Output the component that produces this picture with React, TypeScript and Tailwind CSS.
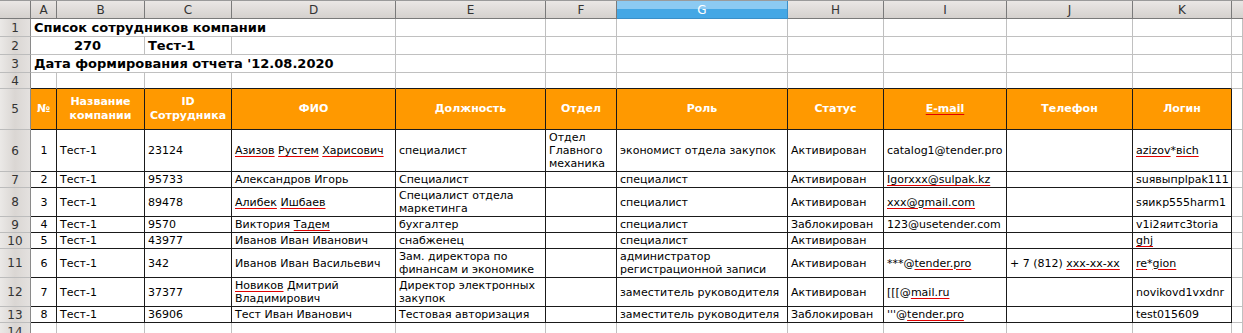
import type { ReactNode } from 'react';
import clsx from 'clsx';

// spell-check underline like in Calc
const U = ({ children }: { children: ReactNode }) => (
  <span className="underline decoration-[#e00000] decoration-1 underline-offset-[2px]">{children}</span>
);

const letters = ['A', 'B', 'C', 'D', 'E', 'F', 'G', 'H', 'I', 'J', 'K'];

type Row = {
  n: string;
  id: string;
  fio: ReactNode;
  pos: ReactNode;
  dept?: ReactNode;
  role: ReactNode;
  status: string;
  email?: ReactNode;
  phone?: ReactNode;
  login: ReactNode;
};

const rows: Row[] = [
  {
    n: '1',
    id: '23124',
    fio: (
      <>
        <U>Азизов</U> <U>Рустем</U> <U>Харисович</U>
      </>
    ),
    pos: 'специалист',
    dept: 'Отдел Главного механика',
    role: 'экономист отдела закупок',
    status: 'Активирован',
    email: 'catalog1@tender.pro',
    login: (
      <>
        <U>azizov</U>*<U>вich</U>
      </>
    ),
  },
  {
    n: '2',
    id: '95733',
    fio: 'Александров Игорь',
    pos: 'Специалист',
    role: 'специалист',
    status: 'Активирован',
    email: <U>Igorxxx@sulpak.kz</U>,
    login: 'suявыпplpak111',
  },
  {
    n: '3',
    id: '89478',
    fio: (
      <>
        <U>Алибек</U> <U>Ишбаев</U>
      </>
    ),
    pos: 'Специалист отдела маркетинга',
    role: 'специалист',
    status: 'Активирован',
    email: <U>xxx@gmail.com</U>,
    login: 'sяикp555harm1',
  },
  {
    n: '4',
    id: '9570',
    fio: (
      <>
        Виктория <U>Тадем</U>
      </>
    ),
    pos: 'бухгалтер',
    role: 'специалист',
    status: 'Заблокирован',
    email: '123@usetender.com',
    login: 'v1i2яитс3toria',
  },
  {
    n: '5',
    id: '43977',
    fio: 'Иванов Иван Иванович',
    pos: 'снабженец',
    role: 'специалист',
    status: 'Активирован',
    login: <U>ghj</U>,
  },
  {
    n: '6',
    id: '342',
    fio: 'Иванов Иван Васильевич',
    pos: 'Зам. директора по финансам и экономике',
    role: 'администратор регистрационной записи',
    status: 'Активирован',
    email: (
      <>
        ***@<U>tender.pro</U>
      </>
    ),
    phone: (
      <>
        + 7 (812) <U>xxx-xx-xx</U>
      </>
    ),
    login: (
      <>
        <U>re</U>*<U>gion</U>
      </>
    ),
  },
  {
    n: '7',
    id: '37377',
    fio: (
      <>
        <U>Новиков</U> Дмитрий Владимирович
      </>
    ),
    pos: 'Директор электронных закупок',
    role: 'заместитель руководителя',
    status: 'Активирован',
    email: (
      <>
        [[[@<U>mail.ru</U>
      </>
    ),
    login: 'novikovd1vxdnr',
  },
  {
    n: '8',
    id: '36906',
    fio: 'Тест Иван Иванович',
    pos: 'Тестовая авторизация',
    role: 'заместитель руководителя',
    status: 'Заблокирован',
    email: (
      <>
        '''@<U>tender.pro</U>
      </>
    ),
    login: 'test015609',
  },
];

const headers: ReactNode[] = [
  '№',
  <>
    Название
    <br />
    компании
  </>,
  <>
    ID
    <br />
    Сотрудника
  </>,
  'ФИО',
  'Должность',
  'Отдел',
  'Роль',
  'Статус',
  <U>E-mail</U>,
  'Телефон',
  'Логин',
];

const RowHead = ({ children }: { children?: ReactNode }) => (
  <div className="flex items-center justify-center border-b border-r border-b-[#bcbcbc] border-r-[#8a8a8a] bg-linear-to-r from-[#ebe9e7] via-[#dad6d3] to-[#e4e1df] text-[12px] text-[#333]">
    {children}
  </div>
);

const Grid = ({ className, children }: { className?: string; children?: ReactNode }) => (
  <div className={clsx('flex items-center overflow-visible whitespace-nowrap border-b border-r border-[#c0c0c0] bg-white', className)}>
    {children}
  </div>
);

const Td = ({ className, children }: { className?: string; children?: ReactNode }) => (
  <div className={clsx('flex items-center overflow-hidden border-b border-r border-[#1a1a1a] bg-white pl-[3px] pr-[2px] text-[11px] leading-[13px] text-black', className)}>
    <div>{children}</div>
  </div>
);

export default function App() {
  return (
    <div className="h-[333px] w-[1243px] overflow-hidden bg-white font-['DejaVu_Sans',sans-serif]">
      <div className="grid h-[333px] grid-cols-[31px_26px_88px_87px_164px_150px_71px_171px_96px_123px_126px_99px_1fr] grid-rows-[18px_18px_18px_18px_16px_41px_42px_16px_29px_16px_16px_29px_29px_16px_1fr] border-t border-[#9a9a9a]">
        {/* column headers */}
        <div className="border-b border-r border-[#7a7a7a] bg-linear-to-b from-[#eae7e5] to-[#d5d1ce]" />
        {letters.map((l) =>
          l === 'G' ? (
            <div
              key={l}
              className="flex items-center justify-center border-b border-r border-[#3a8fc8] bg-linear-to-b from-[#8ccaf2] from-50% to-[#44a7e5] to-50% text-[12px] text-white"
            >
              {l}
            </div>
          ) : (
            <div
              key={l}
              className="flex items-center justify-center border-b border-r border-b-[#7a7a7a] border-r-[#7a7a7a] bg-linear-to-b from-[#eae7e5] to-[#d5d1ce] text-[12px] text-[#333]"
            >
              {l}
            </div>
          )
        )}
        <div className="border-b border-[#7a7a7a] bg-linear-to-b from-[#eae7e5] to-[#d5d1ce]" />

        {/* row 1 */}
        <RowHead>1</RowHead>
        <Grid className="col-span-4 pl-[3px] text-[13px] font-bold">Список сотрудников компании</Grid>
        {letters.slice(4).map((l) => (
          <Grid key={l} />
        ))}
        <Grid />

        {/* row 2 */}
        <RowHead>2</RowHead>
        <Grid className="col-span-2 justify-center text-[13px] font-bold">270</Grid>
        <Grid className="pl-[3px] text-[13px] font-bold">Тест-1</Grid>
        {letters.slice(3).map((l) => (
          <Grid key={l} />
        ))}
        <Grid />

        {/* row 3 */}
        <RowHead>3</RowHead>
        <Grid className="col-span-4 pl-[3px] text-[13px] font-bold">Дата формирования отчета '12.08.2020</Grid>
        {letters.slice(4).map((l) => (
          <Grid key={l} />
        ))}
        <Grid />

        {/* row 4 */}
        <RowHead>4</RowHead>
        {letters.map((l) => (
          <Grid key={l} className="border-b-[#1a1a1a]" />
        ))}
        <Grid />

        {/* row 5: table header */}
        <RowHead>5</RowHead>
        {headers.map((h, i) => (
          <div
            key={i}
            className="flex items-center justify-center border-b border-r border-[#1a1a1a] bg-[#ff9900] text-center text-[11px] font-bold leading-[14px] text-white"
          >
            <div>{h}</div>
          </div>
        ))}
        <Grid />

        {/* data rows */}
        {rows.map((r, i) => (
          <div key={r.n} className="contents">
            <RowHead>{i + 6}</RowHead>
            <Td className="justify-center pl-0 pr-0">{r.n}</Td>
            <Td>Тест-1</Td>
            <Td>{r.id}</Td>
            <Td>{r.fio}</Td>
            <Td>{r.pos}</Td>
            <Td className="items-start pt-[1px]">{r.dept}</Td>
            <Td>{r.role}</Td>
            <Td className="whitespace-nowrap">{r.status}</Td>
            <Td className="whitespace-nowrap">{r.email}</Td>
            <Td className="whitespace-nowrap">{r.phone}</Td>
            <Td className="whitespace-nowrap">{r.login}</Td>
            <Grid />
          </div>
        ))}

        {/* row 14 */}
        <RowHead>14</RowHead>
        {letters.map((l) => (
          <Grid key={l} />
        ))}
        <Grid />
      </div>
    </div>
  );
}
